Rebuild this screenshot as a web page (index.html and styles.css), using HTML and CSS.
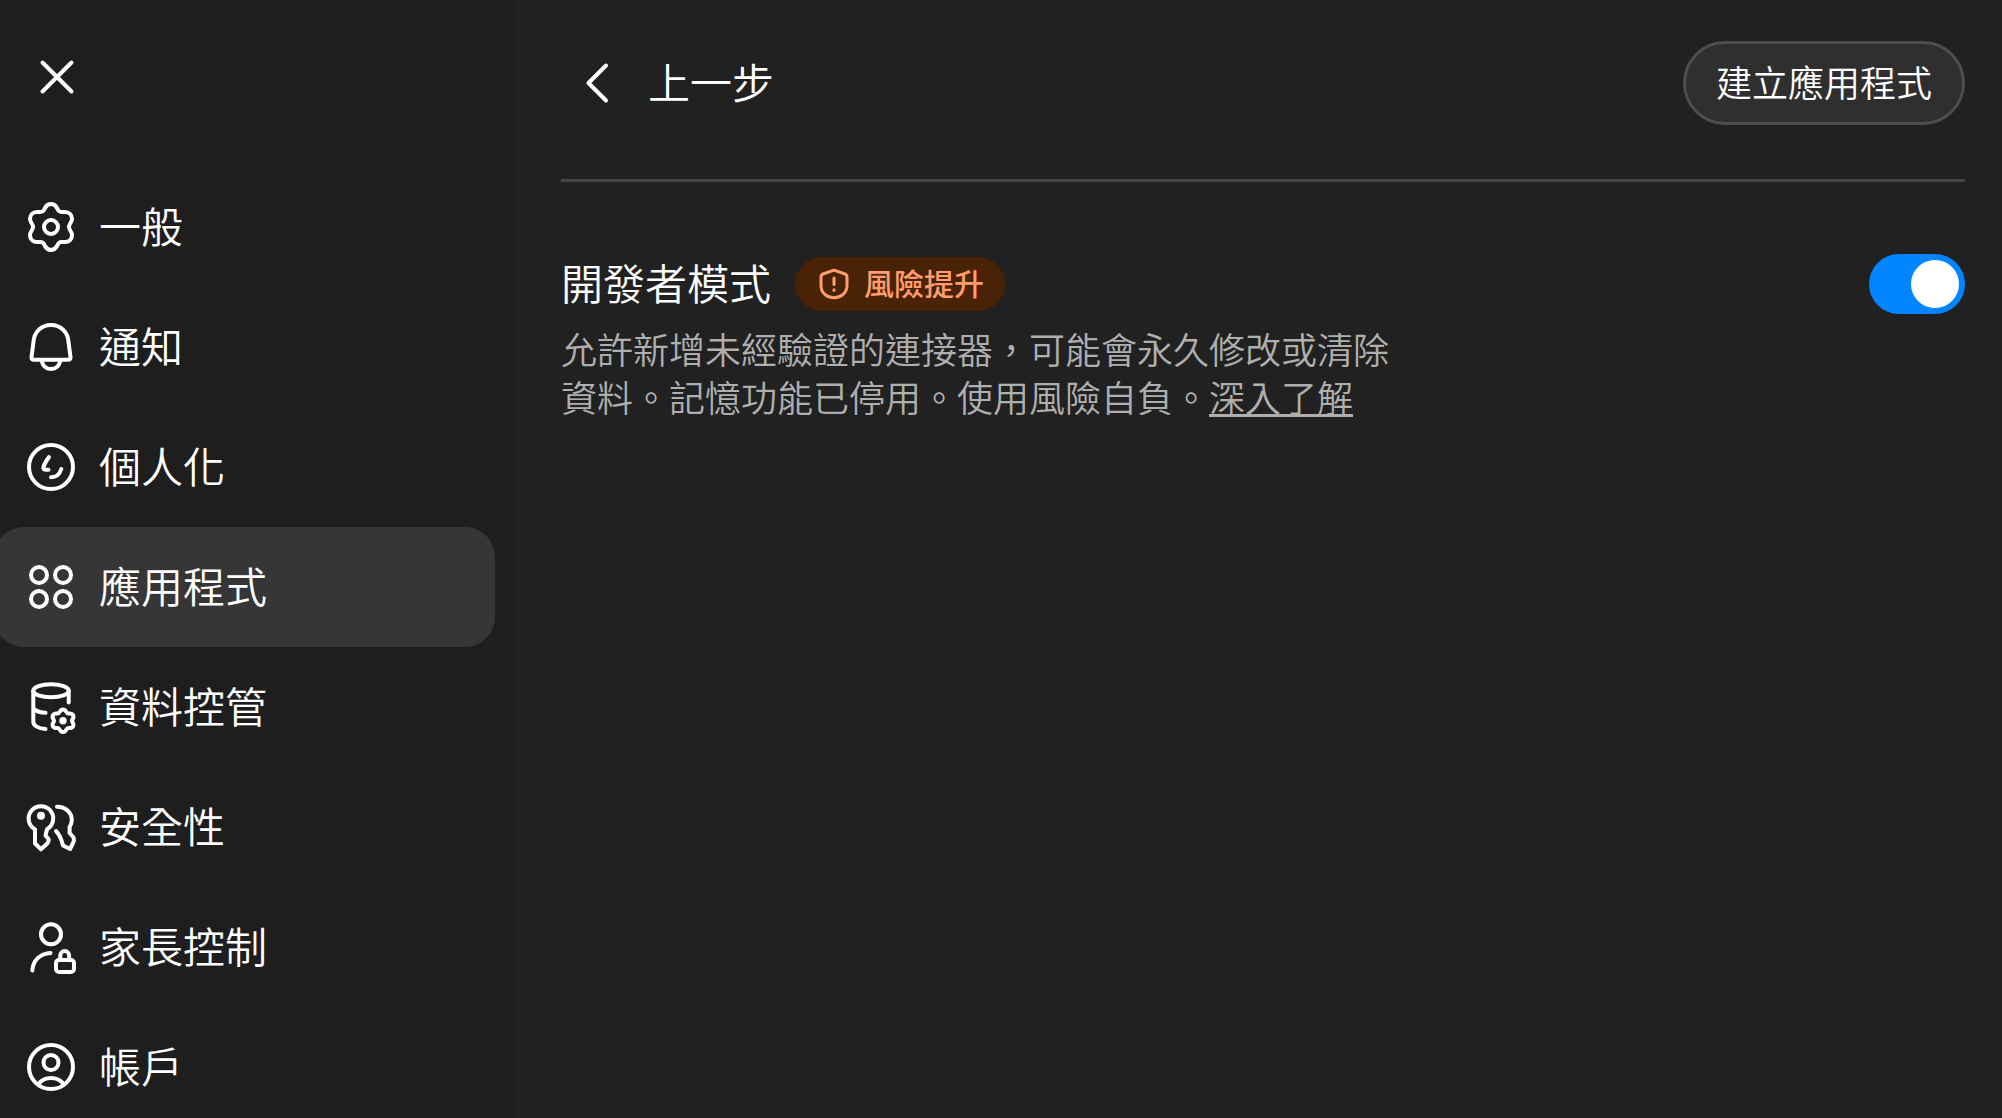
FILE: index.html
```html
<!DOCTYPE html>
<html lang="zh-Hant">
<head>
    <meta charset="UTF-8">
    <meta name="viewport" content="width=device-width, initial-scale=1.0">
    <title>應用程式</title>
    <link rel="stylesheet" href="styles.css">
</head>
<body>
    <div class="settings">
        <aside class="sidebar">
            <button type="button" class="close-btn" aria-label="關閉">
                <svg class="icon" viewBox="0 0 60 60"><path d="M15.5 15.5l29 29M44.5 15.5l-29 29"/></svg>
            </button>
            <nav class="menu">
                <a href="#general" class="menu-item">
                    <svg class="icon" viewBox="0 0 60 60">
                        <path d="M30 7c3 0 4.500 1 6 4s2 4 5 4h3c4 0 7 3 7 7 0 3.500-3 4.500-3 8s3 4.500 3 8c0 4-3 7-7 7h-3c-3 0-3.500 1-5 4s-3 4-6 4-4.500-1-6-4-2-4-5-4h-3c-4 0-7-3-7-7 0-3.500 3-4.500 3-8s-3-4.500-3-8c0-4 3-7 7-7h3c3 0 3.500-1 5-4s3-4 6-4z"/>
                        <circle cx="30" cy="30" r="7"/>
                    </svg>
                    <span class="label">一般</span>
                </a>
                <a href="#notifications" class="menu-item">
                    <svg class="icon" viewBox="0 0 60 60">
                        <path d="M30 8C20 8 13 15.500 12.500 25L10.500 40q-.3 2.700 2.500 2.700h34q2.800 0 2.500-2.700L47.500 25C47 15.500 40 8 30 8z"/>
                        <path d="M20.500 43c1 5.500 4.500 9 9.500 9s8.500-3.500 9.500-9"/>
                    </svg>
                    <span class="label">通知</span>
                </a>
                <a href="#personalization" class="menu-item">
                    <svg class="icon" viewBox="0 0 60 60">
                        <circle cx="30" cy="30" r="22"/>
                        <path d="M28 20c-3 4-4.500 6.500-5.500 10-.5 1.700.2 2.700 1.800 2.700h3.200M30 40.300c5 0 8.700-3.300 10.300-8.300"/>
                    </svg>
                    <span class="label">個人化</span>
                </a>
                <a href="#apps" class="menu-item active" aria-current="page">
                    <svg class="icon" viewBox="0 0 60 60">
                        <circle cx="18" cy="18" r="8"/>
                        <circle cx="42" cy="18" r="8"/>
                        <circle cx="18" cy="42" r="8"/>
                        <circle cx="42" cy="42" r="8"/>
                    </svg>
                    <span class="label">應用程式</span>
                </a>
                <a href="#data" class="menu-item">
                    <svg class="icon" viewBox="0 0 60 60">
                        <ellipse cx="30" cy="13.700" rx="17.700" ry="6.500"/>
                        <path d="M12.300 13.700V45c0 3.500 5 6.500 12.200 7M47.700 13.700V25.500M12.300 30c0 3 5 5.300 12.200 5.800"/>
                        <path d="M42 32.500c1.500 0 2.200.5 3 2s1 2 2.500 2H49c2 0 3.500 1.500 3.500 3.500 0 1.800-1.500 2.200-1.500 3.800s1.500 2 1.500 3.800c0 2-1.500 3.500-3.500 3.500h-1.500c-1.500 0-1.700.5-2.500 2s-1.500 2-3 2-2.200-.5-3-2-1-2-2.500-2H35c-2 0-3.500-1.500-3.500-3.500 0-1.800 1.500-2.200 1.500-3.800s-1.500-2-1.500-3.800c0-2 1.500-3.500 3.500-3.500h1.500c1.500 0 1.700-.5 2.500-2s1.500-2 3-2z"/>
                        <circle class="dot" cx="42" cy="43.800" r="3.700"/>
                    </svg>
                    <span class="label">資料控管</span>
                </a>
                <a href="#security" class="menu-item">
                    <svg class="icon" viewBox="0 0 60 60">
                        <path d="M14 32.300V46.500l6 5.800 5.500-5q2.800-3 2-5.300L24.500 38.500l1.500-6.300A12.300 12.300 0 1 0 14 32.300z"/>
                        <circle class="dot" cx="20" cy="18.700" r="4"/>
                        <path d="M36 9.800C44 9.500 50.500 15 50.800 22.500c.1 3-.8 5-2.200 7.500v6l4 4.500q1 3-.6 5.500l-3 6-7-3.500c-1.200-5-3-10.500-7-14.500"/>
                    </svg>
                    <span class="label">安全性</span>
                </a>
                <a href="#parental" class="menu-item">
                    <svg class="icon" viewBox="0 0 60 60">
                        <circle cx="30" cy="17.300" r="10"/>
                        <path d="M29.500 36C19 36.500 12 43.500 11.300 53.500"/>
                        <rect x="35" y="43" width="18" height="12" rx="3"/>
                        <path d="M39.300 43v-4.500a4.400 4.400 0 0 1 8.800 0V43"/>
                    </svg>
                    <span class="label">家長控制</span>
                </a>
                <a href="#account" class="menu-item">
                    <svg class="icon" viewBox="0 0 60 60">
                        <circle cx="30" cy="30" r="22"/>
                        <circle cx="30" cy="25.500" r="7.500"/>
                        <path d="M17.500 47c3-4 7.500-6 12.500-6s9.500 2 12.500 6"/>
                    </svg>
                    <span class="label">帳戶</span>
                </a>
            </nav>
        </aside>

        <main class="content">
            <header class="content-header">
                <button type="button" class="back-btn">
                    <svg class="icon" viewBox="0 0 60 60"><path d="M38 12.500L20.500 30 38 47.500"/></svg>
                    <span class="label">上一步</span>
                </button>
                <button type="button" class="create-btn"><span class="label">建立應用程式</span></button>
            </header>

            <section class="setting">
                <div class="setting-row">
                    <label class="label" for="dev-mode">開發者模式</label>
                    <span class="badge">
                        <svg class="badge-icon" viewBox="0 0 30 32">
                            <path d="M15 2.200L26 6c1.400.6 2 1.400 2 3v8.500C28 25 22 29.800 15 29.800S2 25 2 17.500V9c0-1.600.6-2.400 2-3z"/>
                            <path d="M15 10v6.500M15 21.800v.4"/>
                        </svg>
                        <span class="label">風險提升</span>
                    </span>
                    <input type="checkbox" id="dev-mode" class="switch" role="switch" checked>
                </div>
                <p class="setting-text">允許新增未經驗證的連接器，可能會永久修改或清除資料。記憶功能已停用。使用風險自負。<a href="#learn-more">深入了解</a></p>
            </section>
        </main>
    </div>
</body>
</html>
```
FILE: styles.css
```css
* {
    box-sizing: border-box;
}
body {
    margin: 0;
    background-color: #212121;
    color: #fff;
    font-family: "Noto Sans CJK TC", "Noto Sans", sans-serif;
    font-size: 42px;
    font-weight: 350;
    line-height: 60px;
    overflow: hidden;
}
button {
    border: none;
    background: none;
    color: inherit;
    font: inherit;
    cursor: pointer;
}
.icon {
    width: 60px;
    height: 60px;
    flex-shrink: 0;
    fill: none;
    stroke: currentColor;
    stroke-width: 4;
    stroke-linecap: round;
    stroke-linejoin: round;
}
.icon .dot {
    fill: currentColor;
    stroke: none;
}
/* CJK glyphs sit low in the line box */
.label {
    display: block;
    padding-bottom: 4px;
}

/* Layout */
.settings {
    display: grid;
    grid-template-columns: 514px 1fr;
    height: 100vh;
}
.sidebar {
    background-color: #1e1e1e;
    padding: 47px 19px 0 0;
    overflow: hidden;
}
.content {
    padding: 41px 37px 0 47px;
}

/* Sidebar */
.close-btn {
    display: flex;
    margin: 0 0 60px 27px;
    padding: 0;
}
.menu {
    margin-left: -6px;
}
.menu-item {
    display: flex;
    align-items: center;
    gap: 18px;
    height: 120px;
    padding: 0 27px;
    border-radius: 30px;
    color: #fff;
    text-decoration: none;
}
.menu-item:hover,
.menu-item.active {
    background-color: #363636;
}

/* Header */
.content-header {
    display: flex;
    align-items: center;
    justify-content: space-between;
    padding-bottom: 54px;
    border-bottom: 3px solid #464646;
}
.back-btn {
    display: flex;
    align-items: center;
    gap: 20px;
    padding: 0 7px;
}
.create-btn {
    height: 84px;
    padding: 0 30px;
    border: 3px solid #4d4d4d;
    border-radius: 42px;
    background-color: #2f2f2f;
    font-size: 36px;
}

/* Developer mode */
.setting {
    padding-top: 70px;
}
.setting-row {
    display: flex;
    align-items: center;
}
.badge {
    display: flex;
    align-items: center;
    gap: 15px;
    height: 54px;
    margin-left: 24px;
    padding: 0 21px 0 24px;
    border-radius: 27px;
    background-color: #4a2206;
    color: #ff9e6c;
    font-size: 30px;
    font-weight: 500;
    line-height: 36px;
}
.badge-icon {
    width: 30px;
    height: 32px;
    fill: none;
    stroke: currentColor;
    stroke-width: 3;
    stroke-linecap: round;
    stroke-linejoin: round;
}
.switch {
    appearance: none;
    width: 96px;
    height: 60px;
    margin: 0 0 0 auto;
    padding: 6px;
    border-radius: 30px;
    background-color: #5d5d5d;
    cursor: pointer;
}
.switch::before {
    content: "";
    display: block;
    width: 48px;
    height: 48px;
    border-radius: 50%;
    background-color: #fff;
}
.switch:checked {
    background-color: #0285ff;
}
.switch:checked::before {
    margin-left: auto;
}
.setting-text {
    max-width: 850px;
    margin: 8px 0 0;
    color: #afafaf;
    font-size: 36px;
    line-height: 48px;
}
.setting-text a {
    color: inherit;
    text-decoration-thickness: 3px;
}
```
